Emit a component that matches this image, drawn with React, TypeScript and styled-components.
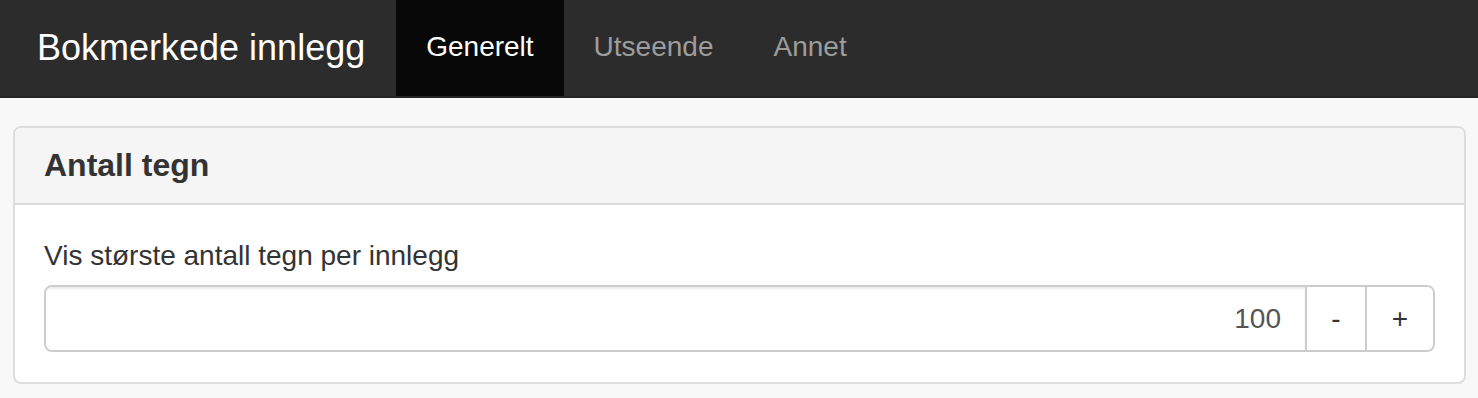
import { createGlobalStyle, styled } from 'styled-components';

const GlobalStyle = createGlobalStyle`
  html, body {
    margin: 0;
    padding: 0;
    background: #f8f8f8;
    font-family: "Liberation Sans", Arial, sans-serif;
    color: #333;
  }
  * { box-sizing: border-box; }
`;

const Navbar = styled.nav`
  display: flex;
  align-items: stretch;
  height: 98px;
  background: #2c2c2c;
  border-bottom: 2px solid #262626;
`;

const Brand = styled.div`
  display: flex;
  align-items: center;
  padding: 0 31px 1px 37px;
  font-size: 36px;
  color: #fff;
`;

const NavList = styled.ul`
  display: flex;
  margin: 0;
  padding: 0;
  list-style: none;
`;

const NavItem = styled.li<{ $active?: boolean }>`
  display: flex;
  align-items: center;
  padding: 0 30px 2px;
  font-size: 28px;
  background: ${(p) => (p.$active ? '#080808' : 'transparent')};
  color: ${(p) => (p.$active ? '#fff' : '#9d9d9d')};
`;

const Main = styled.main`
  padding: 28px 12px 14px 13px;
`;

const Panel = styled.section`
  background: #fff;
  border: 2px solid #ddd;
  border-radius: 8px;
  overflow: hidden;
`;

const PanelHeading = styled.div`
  background: #f5f5f5;
  border-bottom: 2px solid #ddd;
  padding: 18px 29px;
`;

const PanelTitle = styled.h3`
  margin: 0;
  font-size: 32px;
  font-weight: bold;
  line-height: 39px;
  color: #333;
`;

const PanelBody = styled.div`
  padding: 31px 29px 30px;
`;

const Label = styled.label`
  display: block;
  font-size: 28px;
  line-height: 40px;
  margin-bottom: 9px;
  color: #333;
`;

const InputGroup = styled.div`
  display: flex;
  height: 67px;
  border: 2px solid #ccc;
  border-radius: 8px;
  overflow: hidden;
`;

const NumberInput = styled.input`
  flex: 1;
  min-width: 0;
  border: none;
  outline: none;
  padding: 0 24px;
  text-align: right;
  font-family: inherit;
  font-size: 28px;
  color: #555;
  box-shadow: inset 0 2px 2px rgba(0, 0, 0, 0.075);
`;

const StepButton = styled.button<{ $width: number }>`
  width: ${(p) => p.$width}px;
  border: none;
  border-left: 2px solid #ccc;
  background: #fff;
  font-family: inherit;
  font-size: 28px;
  color: #333;
  padding: 0;
  cursor: pointer;
`;

export default function App() {
  return (
    <>
      <GlobalStyle />
      <Navbar>
        <Brand>Bokmerkede innlegg</Brand>
        <NavList>
          <NavItem $active>Generelt</NavItem>
          <NavItem>Utseende</NavItem>
          <NavItem>Annet</NavItem>
        </NavList>
      </Navbar>
      <Main>
        <Panel>
          <PanelHeading>
            <PanelTitle>Antall tegn</PanelTitle>
          </PanelHeading>
          <PanelBody>
            <Label>Vis største antall tegn per innlegg</Label>
            <InputGroup>
              <NumberInput defaultValue="100" />
              <StepButton $width={60}>-</StepButton>
              <StepButton $width={68}>+</StepButton>
            </InputGroup>
          </PanelBody>
        </Panel>
      </Main>
    </>
  );
}
